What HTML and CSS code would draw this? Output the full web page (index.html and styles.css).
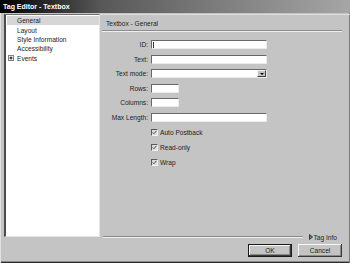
FILE: index.html
```html
<!DOCTYPE html>
<html lang="en">
  <head>
    <meta name="viewport" content="width=device-width, initial-scale=1.0" />
    <title>Tag Editor - Textbox</title>
    <link rel="stylesheet" href="styles.css">
  </head>

  <body>
    <div class="window">
      <div class="titlebar">Tag Editor - Textbox</div>

      <div class="main">
        <!-- Category tree -->
        <ul class="tree">
          <li class="selected"><span class="twisty"></span>General</li>
          <li><span class="twisty"></span>Layout</li>
          <li><span class="twisty"></span>Style Information</li>
          <li><span class="twisty"></span>Accessibility</li>
          <li>
            <span class="twisty">
              <svg width="6" height="6" viewBox="0 0 6 6">
                <rect x="0.5" y="0.5" width="5" height="5" fill="#fff" stroke="#808080" />
                <path d="M1.5 3H4.5M3 1.5V4.5" stroke="#000" stroke-width="1" />
              </svg>
            </span>Events
          </li>
        </ul>

        <!-- Property panel -->
        <div class="panel">
          <div class="panel-title">Textbox - General</div>
          <div class="groove"></div>

          <div class="form">
            <label>ID:</label>
            <div class="field"><span class="caret"></span></div>

            <label>Text:</label>
            <div class="field"></div>

            <label>Text mode:</label>
            <div class="field select"><span class="drop"><span class="arrow"></span></span></div>

            <label>Rows:</label>
            <div class="field short"></div>

            <label>Columns:</label>
            <div class="field short"></div>

            <label>Max Length:</label>
            <div class="field"></div>
          </div>

          <div class="checks">
            <div class="check">
              <span class="box"><svg width="5" height="5" viewBox="0 0 5 5"><path d="M0.6 2.4L1.9 3.8L4.4 0.8" fill="none" stroke="#555" stroke-width="1" /></svg></span>
              Auto Postback
            </div>
            <div class="check">
              <span class="box"><svg width="5" height="5" viewBox="0 0 5 5"><path d="M0.6 2.4L1.9 3.8L4.4 0.8" fill="none" stroke="#555" stroke-width="1" /></svg></span>
              Read-only
            </div>
            <div class="check">
              <span class="box"><svg width="5" height="5" viewBox="0 0 5 5"><path d="M0.6 2.4L1.9 3.8L4.4 0.8" fill="none" stroke="#555" stroke-width="1" /></svg></span>
              Wrap
            </div>
          </div>

          <div class="tag-info">
            <div class="rule"></div>
            <svg width="4" height="6" viewBox="0 0 4 6">
              <polygon points="0.5,0.5 3.5,3 0.5,5.5" fill="#777" stroke="#222" stroke-width="0.8" />
            </svg>
            <span>Tag Info</span>
          </div>
        </div>
      </div>

      <div class="footer">
        <button class="btn default">OK</button>
        <button class="btn">Cancel</button>
      </div>
    </div>
  </body>
</html>
```

FILE: styles.css
```css
* {
  margin: 0;
  padding: 0;
  box-sizing: border-box;
}

body {
  width: 350px;
  height: 263px;
  overflow: hidden;
  font-family: "Liberation Sans", Arial, sans-serif;
  font-size: 6.6px;
  color: #1e1e1e;
  background-color: #c4c4c4;
}

.window {
  height: 263px;
  display: flex;
  flex-direction: column;
  background-color: #c4c4c4;
  box-shadow: inset 1px 0 #e2e2e2, inset -1px 0 #7a7a7a, inset 0 -1px #2a2a2a,
    inset 0 -2px #8a8a8a;
}

.titlebar {
  height: 13px;
  line-height: 13px;
  padding-left: 3px;
  font-size: 7px;
  font-weight: bold;
  color: #ffffff;
  background: linear-gradient(to right, #000000, #585858 29%, #a6a6a6);
}

.main {
  flex: 1;
  min-height: 0;
  display: flex;
  padding-top: 1px;
}

/* Tree */
.tree {
  list-style: none;
  width: 96px;
  margin: 0 0 4px 4px;
  padding: 1px 0 0 1px;
  background-color: #ffffff;
  border-top: 1px solid #707070;
  border-left: 2px solid #4a4a4a;
  border-right: 1px solid #e4e4e4;
  border-bottom: 1px solid #e4e4e4;
}

.tree li {
  height: 9.4px;
  display: flex;
  align-items: center;
  white-space: nowrap;
}

.tree li.selected {
  background-color: #d6d6d6;
}

.twisty {
  width: 10px;
  height: 6px;
  display: flex;
  padding-left: 1px;
}

/* Panel */
.panel {
  flex: 1;
  display: flex;
  flex-direction: column;
  border-top: 1px solid #dedede;
}

.panel-title {
  padding: 5px 0 0 6px;
  line-height: 8px;
}

.groove {
  height: 2px;
  margin: 2px 8px 0 2px;
  border-top: 1px solid #8e8e8e;
  border-bottom: 1px solid #efefef;
}

.form {
  display: grid;
  grid-template-columns: 48px 116px;
  grid-auto-rows: 9px;
  column-gap: 3px;
  row-gap: 5.5px;
  align-items: center;
  margin-top: 8px;
}

.form label {
  text-align: right;
  line-height: 9px;
  white-space: nowrap;
}

.field {
  height: 9px;
  display: flex;
  align-items: center;
  background-color: #ffffff;
  border-top: 1px solid #686868;
  border-left: 1px solid #686868;
  border-bottom: 1px solid #ececec;
  border-right: 1px solid #ececec;
}

.field.short {
  width: 28px;
}

.caret {
  width: 1px;
  height: 6px;
  margin-left: 1px;
  background-color: #333;
}

.select {
  justify-content: flex-end;
}

.drop {
  width: 9px;
  height: 7px;
  display: flex;
  align-items: center;
  justify-content: center;
  background-color: #c4c4c4;
  border-top: 1px solid #f2f2f2;
  border-left: 1px solid #f2f2f2;
  border-bottom: 1px solid #404040;
  border-right: 1px solid #404040;
}

.arrow {
  width: 0;
  height: 0;
  border-left: 2px solid transparent;
  border-right: 2px solid transparent;
  border-top: 2px solid #000;
}

.checks {
  margin: 3.5px 0 0 51px;
}

.check {
  height: 15px;
  display: flex;
  align-items: center;
  gap: 2px;
}

.box {
  width: 7px;
  height: 7px;
  display: flex;
  align-items: center;
  justify-content: center;
  background-color: #dcdcdc;
  border-top: 1px solid #5a5a5a;
  border-left: 1px solid #5a5a5a;
  border-bottom: 1px solid #f2f2f2;
  border-right: 1px solid #f2f2f2;
}

.tag-info {
  height: 8px;
  margin-top: auto;
  display: flex;
  align-items: center;
  padding: 0 13px 0 3px;
}

.tag-info .rule {
  flex: 1;
  height: 2px;
  margin-right: 6px;
  border-top: 1px solid #8a8a8a;
  border-bottom: 1px solid #eeeeee;
}

.tag-info svg {
  margin-right: 1px;
}

/* Buttons */
.footer {
  height: 22px;
  display: flex;
  justify-content: flex-end;
  gap: 6px;
  padding: 3px 8px 0 0;
}

.btn {
  width: 44px;
  height: 13px;
  font: inherit;
  color: #1e1e1e;
  background-color: #c4c4c4;
  border: none;
  box-shadow: inset -1px -1px #3a3a3a, inset 1px 1px #f6f6f6,
    inset -2px -2px #8a8a8a;
}

.btn.default {
  border: 1px solid #1a1a1a;
}
```
